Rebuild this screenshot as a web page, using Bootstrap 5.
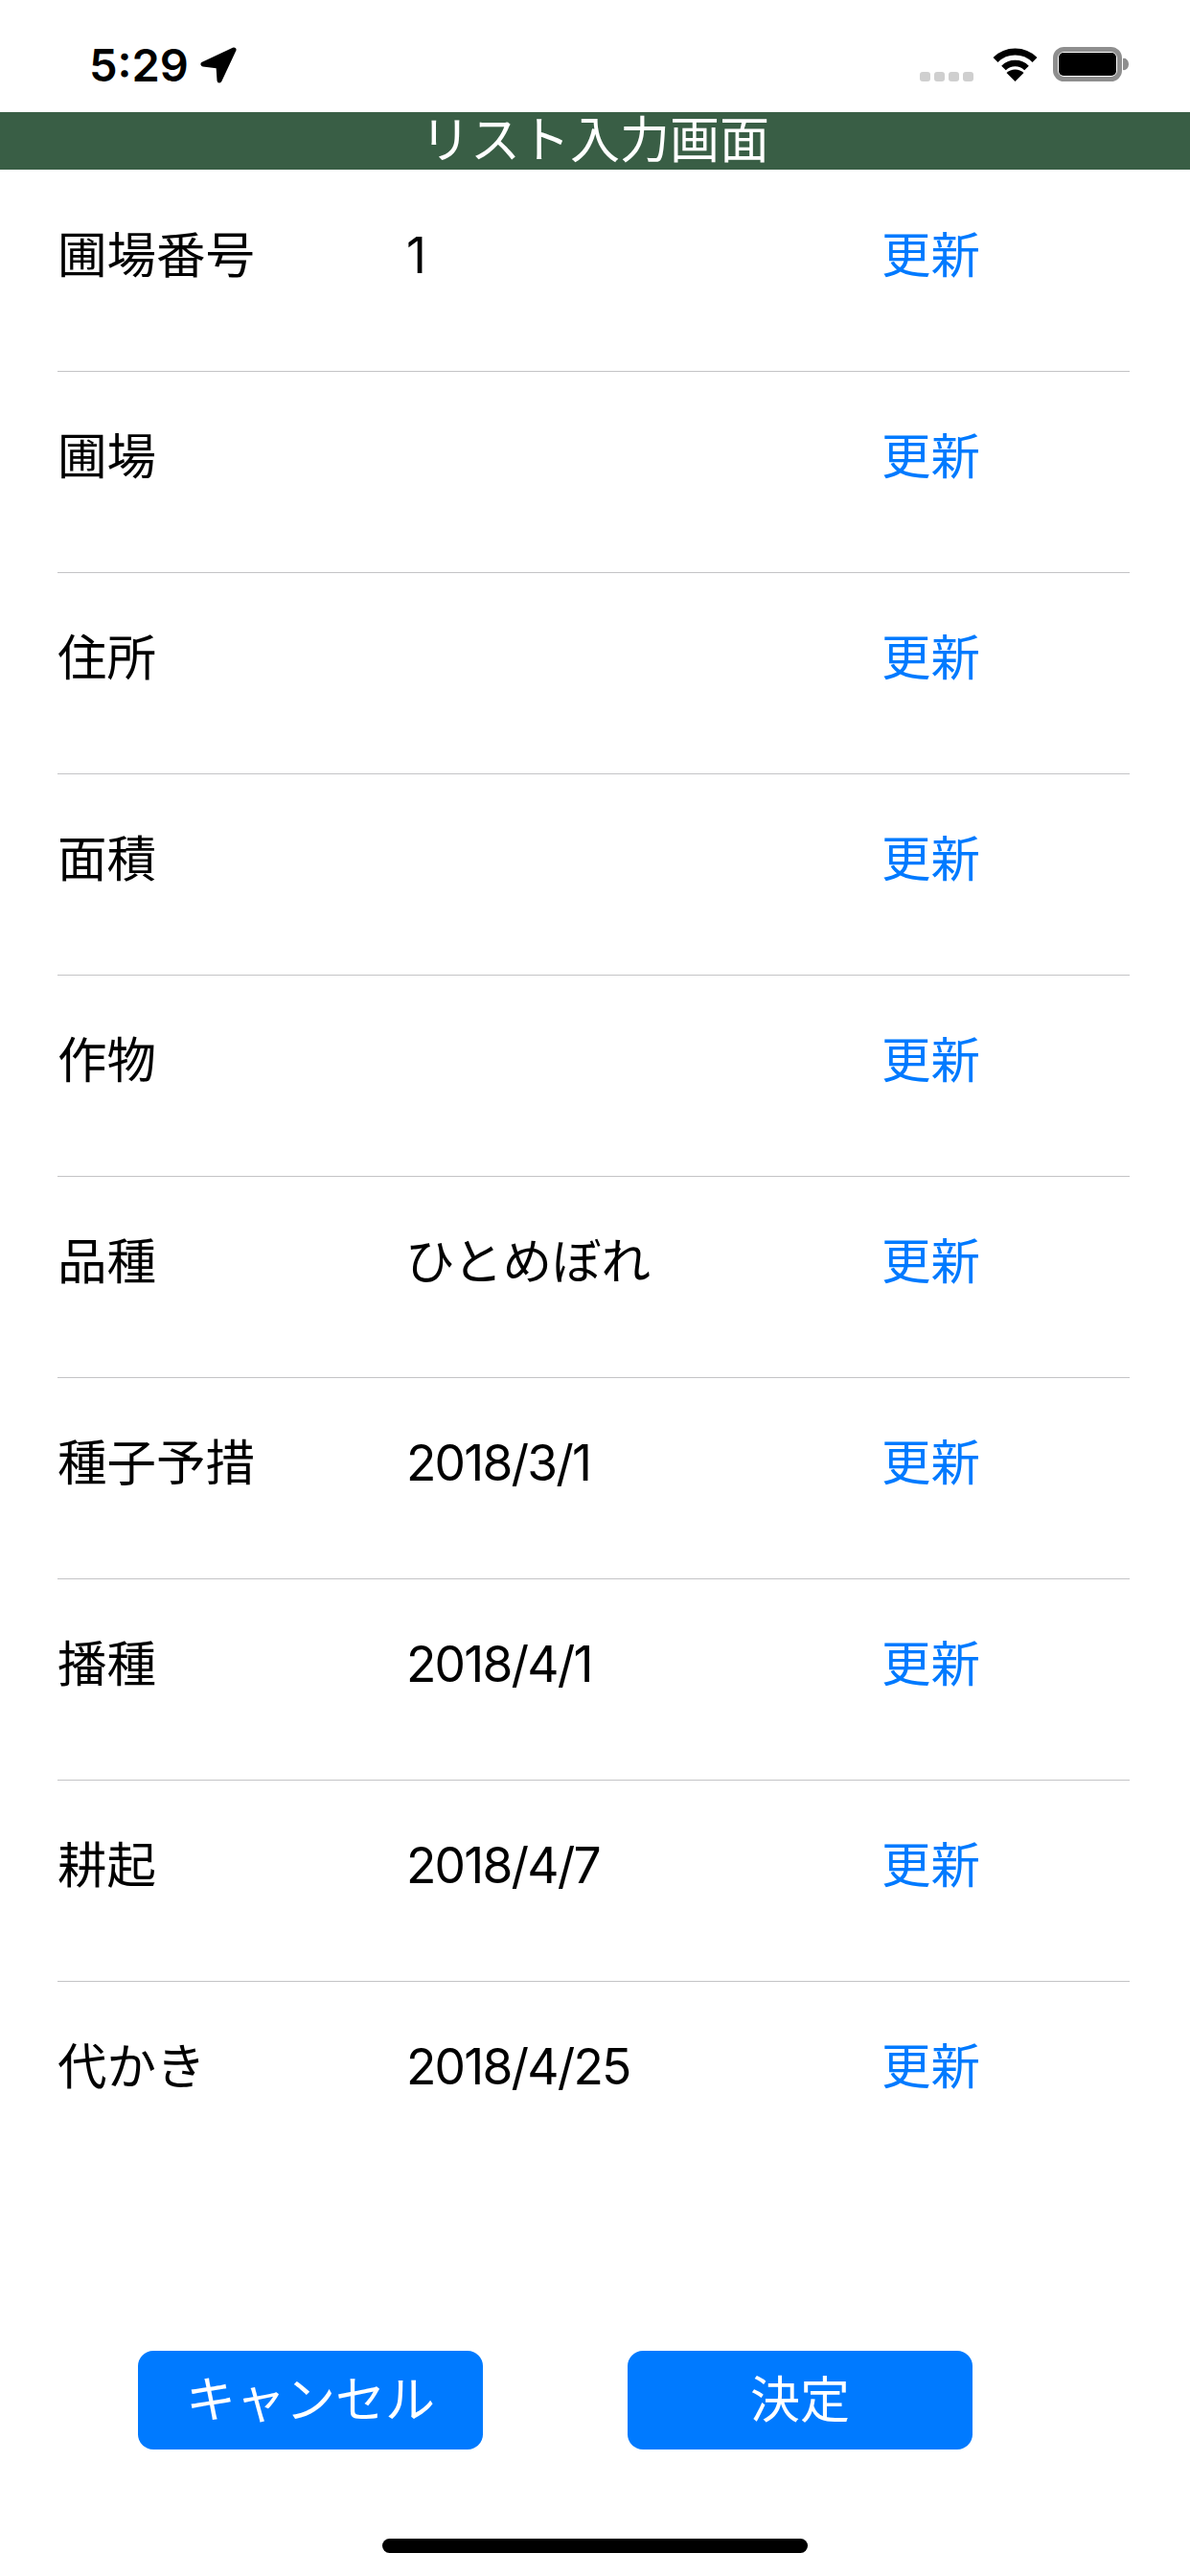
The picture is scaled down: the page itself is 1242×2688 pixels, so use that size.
<!DOCTYPE html>
<html lang="ja">
<head>
<meta charset="utf-8">
<title>リスト入力画面</title>
<link href="https://cdn.jsdelivr.net/npm/bootstrap@5.3.0/dist/css/bootstrap.min.css" rel="stylesheet">
<style>
html,body{margin:0;background:#fff;}
body{width:1242px;height:2688px;font-family:Inter,"Noto Sans CJK JP",sans-serif;font-size:51.5px;color:#000;overflow:hidden;}
.phone-status{height:117px;padding:49px 64px 0 93px;align-items:flex-start;}
.clock{font-size:47px;font-weight:600;line-height:38px;margin-right:12px;}
.sig-dots{gap:4px;margin-top:26px;margin-right:20px;}
.sig-dots i{display:block;width:11px;height:10px;border-radius:3px;background:#cfcfcf;}
.app-title{height:60px;background:#395e45;color:#fff;line-height:60px;text-align:center;font-size:52px;font-weight:400;}
.field-list{margin:1px 63px 0 60px;}
.field-row{height:210px;padding:59px 0 0;border:0;border-bottom:2px solid #c4c4c6;border-radius:0;line-height:58px;color:#000;}
.f-label{width:363px;}
.f-value{width:497px;}
.num{letter-spacing:-1.8px;padding-left:1px;}
.f-action{color:#007aff;text-decoration:none;line-height:58px;}
.action-bar{margin-top:175px;padding-left:144px;gap:151px;}
.act-btn{width:360px;height:103px;background:#007aff;border:0;border-radius:16px;color:#fff;font-size:52px;padding:0;line-height:103px;}
.act-btn:hover{background:#007aff;color:#fff;}
.home-bar{width:444px;height:15px;border-radius:8px;background:#000;margin:93px auto 0;}
</style>
</head>
<body>
<div class="phone-status d-flex">
  <span class="clock">5:29</span>
  <svg width="38" height="38" viewBox="0 0 38 38"><path d="M35 3 3 18 19 20 20 35Z" fill="#000" stroke="#000" stroke-width="5" stroke-linejoin="round"/></svg>
  <div class="ms-auto d-flex sig-dots"><i></i><i></i><i></i><i></i></div>
  <svg width="47" height="36" viewBox="0 0 47 36" class="me-3"><path d="M3 13.5A29 29 0 0 1 44 13.5" fill="none" stroke="#000" stroke-width="7"/><path d="M11.5 22A17 17 0 0 1 35.5 22" fill="none" stroke="#000" stroke-width="6.5"/><path d="M23.5 36 14.5 27A13 13 0 0 1 32.5 27Z" fill="#000"/></svg>
  <svg width="79" height="36" viewBox="0 0 79 36"><rect x="2.5" y="2.5" width="67" height="31" rx="9" fill="none" stroke="#8e8e8e" stroke-width="5"/><rect x="6" y="6" width="60" height="24" rx="5" fill="#000"/><path d="M73 12a5 6 0 0 1 6 6 5 6 0 0 1-6 6Z" fill="#8e8e8e"/></svg>
</div>
<div class="app-title">リスト入力画面</div>
<div class="list-group list-group-flush field-list">
  <div class="list-group-item field-row d-flex"><span class="f-label">圃場番号</span><span class="f-value num">1</span><a href="#" class="f-action">更新</a></div>
  <div class="list-group-item field-row d-flex"><span class="f-label">圃場</span><span class="f-value"></span><a href="#" class="f-action">更新</a></div>
  <div class="list-group-item field-row d-flex"><span class="f-label">住所</span><span class="f-value"></span><a href="#" class="f-action">更新</a></div>
  <div class="list-group-item field-row d-flex"><span class="f-label">面積</span><span class="f-value"></span><a href="#" class="f-action">更新</a></div>
  <div class="list-group-item field-row d-flex"><span class="f-label">作物</span><span class="f-value"></span><a href="#" class="f-action">更新</a></div>
  <div class="list-group-item field-row d-flex"><span class="f-label">品種</span><span class="f-value">ひとめぼれ</span><a href="#" class="f-action">更新</a></div>
  <div class="list-group-item field-row d-flex"><span class="f-label">種子予措</span><span class="f-value num">2018/3/1</span><a href="#" class="f-action">更新</a></div>
  <div class="list-group-item field-row d-flex"><span class="f-label">播種</span><span class="f-value num">2018/4/1</span><a href="#" class="f-action">更新</a></div>
  <div class="list-group-item field-row d-flex"><span class="f-label">耕起</span><span class="f-value num">2018/4/7</span><a href="#" class="f-action">更新</a></div>
  <div class="list-group-item field-row d-flex"><span class="f-label">代かき</span><span class="f-value num">2018/4/25</span><a href="#" class="f-action">更新</a></div>
</div>
<div class="d-flex action-bar">
  <button type="button" class="btn act-btn">キャンセル</button>
  <button type="button" class="btn act-btn">決定</button>
</div>
<div class="home-bar"></div>
<script src="https://cdn.jsdelivr.net/npm/bootstrap@5.3.0/dist/js/bootstrap.bundle.min.js"></script>
</body>
</html>
